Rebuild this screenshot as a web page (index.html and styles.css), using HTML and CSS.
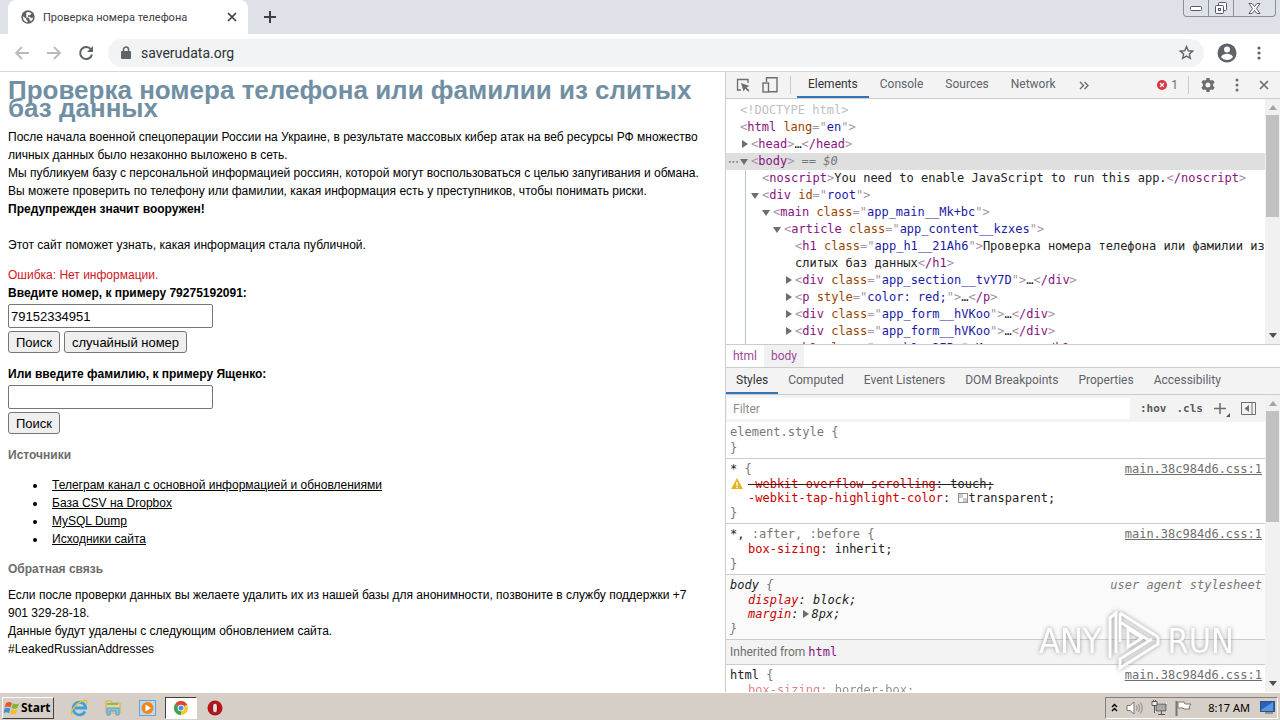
FILE: index.html
```
<!DOCTYPE html>
<html lang="ru">

<head>
     <meta charset="UTF-8">
     <meta name="viewport" content="width=device-width, initial-scale=1.0">
     <title>Проверка номера телефона</title>
     <link rel="stylesheet" href="styles.css">
</head>

<body>
     <header class="tabstrip">
          <div class="tab">
               <svg class="tab-icon" viewBox="0 0 24 24"><circle cx="12" cy="12" r="11.500" fill="#5f6368"/><path fill="#fff" d="M3.500 10.500L9 15v2l2.500 2v2C6.500 20.500 3 16.500 3.500 10.500zM9 4.500c3-2 7.500-.5 9 2l-3 2.500h-3v2.500l3 .5 3 2 2.500-1c0 3-1.500 5.500-3.500 6.500-.5-1.500-1-2-2.500-2v-3l-2-1.500H9V9.500z"/></svg>
               <span class="tab-title">Проверка номера телефона</span>
               <button class="icon-btn" aria-label="Close tab"><svg width="10" height="10" viewBox="0 0 10 10"><path d="M1 1l8 8M9 1l-8 8" stroke="#3c4043" stroke-width="1.700"/></svg></button>
          </div>
          <button class="icon-btn new-tab" aria-label="New tab"><svg width="12" height="12" viewBox="0 0 12 12"><path d="M6 0v12M0 6h12" stroke="#3c4043" stroke-width="2"/></svg></button>
          <div class="win-controls">
               <button aria-label="Minimize"><svg width="12" height="5" viewBox="0 0 12 5"><rect x=".5" y=".5" width="11" height="4" rx="1" fill="#fff" stroke="#555b66"/></svg></button>
               <button aria-label="Restore"><svg width="14" height="13" viewBox="0 0 14 13"><g fill="#fff" stroke="#555b66"><rect x="4.500" y=".5" width="8" height="8" rx="1"/><rect x="1.500" y="3.500" width="8" height="8" rx="1"/><rect x="4.500" y="6.500" width="2" height="2"/></g></svg></button>
               <button class="win-close" aria-label="Close"><svg width="13" height="11" viewBox="0 0 13 11"><path d="M1 .5h3l2.500 3L9 .5h3L8.500 5.500l3.500 5H9l-2.500-3-2.500 3H1l3.500-5z" fill="#fff" stroke="#555b66"/></svg></button>
          </div>
     </header>

     <nav class="toolbar">
          <button class="icon-btn" aria-label="Back"><svg width="16" height="16" viewBox="0 0 16 16"><path d="M15 8H2M8 2L2 8l6 6" fill="none" stroke="#b9bbbe" stroke-width="1.800"/></svg></button>
          <button class="icon-btn" aria-label="Forward"><svg width="16" height="16" viewBox="0 0 16 16"><path d="M1 8h13M8 2l6 6-6 6" fill="none" stroke="#b9bbbe" stroke-width="1.800"/></svg></button>
          <button class="icon-btn" aria-label="Reload"><svg width="16" height="16" viewBox="0 0 16 16"><path d="M13 4.500A6 6 0 1 0 14 9.500" fill="none" stroke="#5f6368" stroke-width="2"/><path d="M15 1v6H9z" fill="#5f6368"/></svg></button>
          <div class="address">
               <svg width="10" height="13" viewBox="0 0 10 13"><rect y="5" width="10" height="8" rx="1" fill="#5f6368"/><path d="M2.500 5V3.500a2.500 2.500 0 0 1 5 0V5" fill="none" stroke="#5f6368" stroke-width="1.500"/></svg>
               <input type="text" value="saverudata.org" aria-label="Address">
               <svg width="15" height="15" viewBox="0 0 24 24"><path d="M12 2.500l2.800 6.700 7.200.6-5.500 4.700 1.700 7L12 17.800l-6.200 3.700 1.700-7L2 9.800l7.200-.6z" fill="none" stroke="#5f6368" stroke-width="2.200"/></svg>
          </div>
          <button class="icon-btn profile" aria-label="Profile"><svg width="20" height="20" viewBox="0 0 20 20"><circle cx="10" cy="10" r="9.500" fill="#5f6368"/><circle cx="10" cy="6.500" r="3" fill="#fff"/><path d="M4 14c1-2.500 3.500-3.200 6-3.200s5 .7 6 3.200c-1.500 2-3.500 3-6 3s-4.500-1-6-3z" fill="#fff"/></svg></button>
          <button class="icon-btn" aria-label="Menu"><svg width="4" height="14" viewBox="0 0 4 14"><g fill="#5f6368"><circle cx="2" cy="2" r="1.600"/><circle cx="2" cy="7" r="1.600"/><circle cx="2" cy="12" r="1.600"/></g></svg></button>
     </nav>

     <div class="content">
          <main class="page">
               <h1>Проверка номера телефона или фамилии из слитых<br>баз данных</h1>
               <p>После начала военной спецоперации России на Украине, в результате массовых кибер атак на веб ресурсы РФ множество<br>личных данных было незаконно выложено в сеть.<br>Мы публикуем базу с персональной информацией россиян, которой могут воспользоваться с целью запугивания и обмана.<br>Вы можете проверить по телефону или фамилии, какая информация есть у преступников, чтобы понимать риски.<br><b>Предупрежден значит вооружен!</b><br><br>Этот сайт поможет узнать, какая информация стала публичной.</p>
               <p class="error">Ошибка: Нет информации.</p>
               <form class="form">
                    <label for="phone">Введите номер, к примеру 79275192091:</label>
                    <input type="text" id="phone" value="79152334951">
                    <div class="form-buttons">
                         <button type="button">Поиск</button>
                         <button type="button">случайный номер</button>
                    </div>
               </form>
               <form class="form form-name">
                    <label for="surname">Или введите фамилию, к примеру Ященко:</label>
                    <input type="text" id="surname">
                    <div class="form-buttons">
                         <button type="button">Поиск</button>
                    </div>
               </form>
               <h2>Источники</h2>
               <ul>
                    <li><a href="#">Телеграм канал с основной информацией и обновлениями</a></li>
                    <li><a href="#">База CSV на Dropbox</a></li>
                    <li><a href="#">MySQL Dump</a></li>
                    <li><a href="#">Исходники сайта</a></li>
               </ul>
               <h2>Обратная связь</h2>
               <p class="feedback">Если после проверки данных вы желаете удалить их из нашей базы для анонимности, позвоните в службу поддержки +7<br>901 329-28-18.<br>Данные будут удалены с следующим обновлением сайта.<br>#LeakedRussianAddresses</p>
          </main>

          <aside class="devtools">
               <div class="dt-toolbar">
                    <button class="icon-btn" aria-label="Inspect"><svg width="14" height="14" viewBox="0 0 14 14"><path d="M5 12H1.500V1.500H12V5" fill="none" stroke="#6e6e6e" stroke-width="1.300"/><path d="M5 5l8.500 3-3 1.500 3 3-1.200 1.200-3-3L7.500 13.500z" fill="#6e6e6e"/></svg></button>
                    <button class="icon-btn" aria-label="Device"><svg width="16" height="16" viewBox="0 0 16 16"><path d="M4.500 5V.7h10.500v14H7" fill="none" stroke="#6e6e6e" stroke-width="1.400"/><rect x="1" y="6" width="5.500" height="9" fill="none" stroke="#6e6e6e" stroke-width="1.400"/></svg></button>
                    <span class="divider"></span>
                    <div class="dt-tabs">
                         <button class="active">Elements</button>
                         <button>Console</button>
                         <button>Sources</button>
                         <button>Network</button>
                    </div>
                    <button class="icon-btn" aria-label="More tabs"><svg width="10" height="9" viewBox="0 0 10 9"><path d="M1 1l3.500 3.500L1 8M5.500 1L9 4.500 5.500 8" fill="none" stroke="#6e6e6e" stroke-width="1.400"/></svg></button>
                    <div class="dt-actions">
                         <button class="icon-btn errors"><svg width="10" height="10" viewBox="0 0 10 10"><circle cx="5" cy="5" r="5" fill="#db3340"/><path d="M3 3l4 4M7 3L3 7" stroke="#fff" stroke-width="1.200"/></svg>1</button>
                         <span class="divider"></span>
                         <button class="icon-btn" aria-label="Settings"><svg width="14" height="14" viewBox="0 0 14 14"><path fill="#6e6e6e" fill-rule="evenodd" d="M5.500 0h3l.4 1.900 1.300.7L12 2l1.600 2.600-1.500 1.300v2.200l1.500 1.300L12 12l-1.800-.6-1.300.7-.4 1.900h-3l-.4-1.900-1.300-.7L2 12 .4 9.400l1.500-1.300V5.900L.4 4.600 2 2l1.800.6 1.300-.7zM7 4.500a2.500 2.500 0 1 0 0 5 2.500 2.500 0 0 0 0-5z"/></svg></button>
                         <button class="icon-btn" aria-label="Options"><svg width="4" height="14" viewBox="0 0 4 14"><g fill="#6e6e6e"><circle cx="2" cy="2" r="1.500"/><circle cx="2" cy="7" r="1.500"/><circle cx="2" cy="12" r="1.500"/></g></svg></button>
                         <button class="icon-btn" aria-label="Close"><svg width="10" height="10" viewBox="0 0 10 10"><path d="M1 1l8 8M9 1L1 9" stroke="#6e6e6e" stroke-width="1.700"/></svg></button>
                    </div>
               </div>

               <div class="elements">
                    <div class="tree">
                         <div class="row d0 doctype">&lt;!DOCTYPE html&gt;</div>
                         <div class="row d0"><i>&lt;</i><b>html</b> <em>lang</em><i>="</i><s>en</s><i>"&gt;</i></div>
                         <div class="row d1 closed"><i>&lt;</i><b>head</b><i>&gt;</i>…<i>&lt;</i><b>/head</b><i>&gt;</i></div>
                         <div class="row d1 open selected"><i>&lt;</i><b>body</b><i>&gt;</i> <span class="ref">== <var>$0</var></span></div>
                         <div class="body-children">
                              <div class="row d2"><i>&lt;</i><b>noscript</b><i>&gt;</i>You need to enable JavaScript to run this app.<i>&lt;</i><b>/noscript</b><i>&gt;</i></div>
                              <div class="row d2 open"><i>&lt;</i><b>div</b> <em>id</em><i>="</i><s>root</s><i>"&gt;</i></div>
                              <div class="row d3 open"><i>&lt;</i><b>main</b> <em>class</em><i>="</i><s>app_main__Mk+bc</s><i>"&gt;</i></div>
                              <div class="row d4 open"><i>&lt;</i><b>article</b> <em>class</em><i>="</i><s>app_content__kzxes</s><i>"&gt;</i></div>
                              <div class="row d5"><i>&lt;</i><b>h1</b> <em>class</em><i>="</i><s>app_h1__21Ah6</s><i>"&gt;</i>Проверка номера телефона или фамилии из<br>слитых баз данных<i>&lt;</i><b>/h1</b><i>&gt;</i></div>
                              <div class="row d5 closed"><i>&lt;</i><b>div</b> <em>class</em><i>="</i><s>app_section__tvY7D</s><i>"&gt;</i>…<i>&lt;</i><b>/div</b><i>&gt;</i></div>
                              <div class="row d5 closed"><i>&lt;</i><b>p</b> <em>style</em><i>="</i><s>color: red;</s><i>"&gt;</i>…<i>&lt;</i><b>/p</b><i>&gt;</i></div>
                              <div class="row d5 closed"><i>&lt;</i><b>div</b> <em>class</em><i>="</i><s>app_form__hVKoo</s><i>"&gt;</i>…<i>&lt;</i><b>/div</b><i>&gt;</i></div>
                              <div class="row d5 closed"><i>&lt;</i><b>div</b> <em>class</em><i>="</i><s>app_form__hVKoo</s><i>"&gt;</i>…<i>&lt;</i><b>/div</b><i>&gt;</i></div>
                              <div class="row d5"><i>&lt;</i><b>h1</b> <em>class</em><i>="</i><s>app_h1__2IBo</s><i>"&gt;</i>Источники<i>&lt;</i><b>/h1</b><i>&gt;</i></div>
                         </div>
                    </div>
                    <div class="scrollbar tree-scroll"><span class="up"></span><span class="thumb"></span><span class="down"></span></div>
               </div>

               <div class="crumbs"><a href="#">html</a><a href="#" class="current">body</a></div>

               <div class="side-tabs">
                    <button class="active">Styles</button>
                    <button>Computed</button>
                    <button>Event Listeners</button>
                    <button>DOM Breakpoints</button>
                    <button>Properties</button>
                    <button>Accessibility</button>
               </div>

               <div class="styles-pane">
                    <div class="styles-main">
                         <div class="filter">
                              <input type="text" placeholder="Filter" aria-label="Filter">
                              <button>:hov</button>
                              <button>.cls</button>
                              <button class="add-rule" aria-label="New rule"><svg width="18" height="16" viewBox="0 0 18 16"><path d="M7 2v11M1 7.500h12" stroke="#6e6e6e" stroke-width="1.500"/><path d="M17 12v4h-4z" fill="#5a5a5a"/></svg></button>
                              <button aria-label="Sidebar"><svg width="15" height="13" viewBox="0 0 15 13"><path d="M.5.5h14v12H.5zM11 .5v12" fill="none" stroke="#6e6e6e"/><path d="M8 3v7L3.500 6.500z" fill="#6e6e6e"/></svg></button>
                         </div>
                         <div class="rules">
                              <section class="rule muted">
                                   <div class="selector">element.style {</div>
                                   <div class="end">}</div>
                              </section>
                              <section class="rule">
                                   <div class="selector"><span>* <u>{</u></span><a href="#">main.38c984d6.css:1</a></div>
                                   <div class="prop invalid"><svg class="warn" width="12" height="11" viewBox="0 0 12 11"><path d="M6 0l6 11H0z" fill="#e8b321"/><path d="M6 4v3.500M6 8.500V10" stroke="#fff" stroke-width="1.400"/></svg><del><span>-webkit-overflow-scrolling</span>: touch;</del></div>
                                   <div class="prop"><span>-webkit-tap-highlight-color</span>: <span class="swatch"></span>transparent;</div>
                                   <div class="end">}</div>
                              </section>
                              <section class="rule">
                                   <div class="selector"><span>*, <u>:after, :before {</u></span><a href="#">main.38c984d6.css:1</a></div>
                                   <div class="prop"><span>box-sizing</span>: inherit;</div>
                                   <div class="end">}</div>
                              </section>
                              <section class="rule agent">
                                   <div class="selector"><span>body <u>{</u></span><u>user agent stylesheet</u></div>
                                   <div class="prop"><span>display</span>: block;</div>
                                   <div class="prop"><span>margin</span>:<span class="expand"></span>8px;</div>
                                   <div class="end">}</div>
                              </section>
                              <div class="inherited">Inherited from <a href="#">html</a></div>
                              <section class="rule">
                                   <div class="selector"><span>html <u>{</u></span><a href="#">main.38c984d6.css:1</a></div>
                                   <div class="prop faded"><span>box-sizing</span>: border-box;</div>
                              </section>
                         </div>
                    </div>
                    <div class="scrollbar"><span class="up"></span><span class="thumb"></span><span class="down"></span></div>
               </div>
               <div class="watermark">
                    <span>ANY</span>
                    <svg width="56" height="62" viewBox="0 0 56 62"><path d="M4 48V8l6-5v40M14 3l38 24M14 3v29M14 12l30 19M52 27v7L14 58v-9l32-20M22 19v18l14-9z" fill="none" stroke="#fff" stroke-width="3"/></svg>
                    <span>RUN</span>
               </div>
          </aside>
     </div>

     <footer class="taskbar">
          <button class="start"><svg width="16" height="16" viewBox="0 0 16 16"><path d="M2 3q3-2 6 0L6.500 7.500q-3-2-6 0z" fill="#e8552d"/><path d="M9 3.200q3 2 6 0L13.500 7.800q-3 2-6 0z" fill="#7db82e"/><path d="M.3 8.800q3-2 6 0L5 13.300q-3-2-5 0z" fill="#3a93d8"/><path d="M7.300 9q3 2 6 0L12 13.600q-3 2-6 0z" fill="#f5bd2e"/></svg>Start</button>
          <button class="task" aria-label="Internet Explorer"><svg width="18" height="18" viewBox="0 0 18 18"><path d="M15 12.500a6.300 6.300 0 1 1 .7-3.500H5" fill="none" stroke="#3aa2dc" stroke-width="2.800"/><path d="M2 16C-1 13 7 3 14 1.500c4-.8 3 2.500 2 4" fill="none" stroke="#e6bd3c" stroke-width="1.300"/></svg></button>
          <button class="task" aria-label="Explorer"><svg width="18" height="16" viewBox="0 0 18 16"><path d="M2 1h5l1 2h8v10H2z" fill="#eed587" stroke="#cfae50"/><path d="M3 4h11" stroke="#6cab65" stroke-width="1.500"/><path d="M3 15V8h12v7h-3v-4H6v4z" fill="#82c4e6" stroke="#5b9ec8"/></svg></button>
          <button class="task" aria-label="Media Player"><svg width="17" height="16" viewBox="0 0 17 16"><rect x=".5" y=".5" width="16" height="15" fill="#b9daf0" stroke="#6f9fca"/><circle cx="8.500" cy="8" r="6" fill="#f0861c"/><path d="M6.500 4.500v7l5.500-3.500z" fill="#fff"/></svg></button>
          <button class="task running" aria-label="Chrome"><svg width="14" height="14" viewBox="0 0 14 14"><circle cx="7" cy="7" r="7" fill="#f6c62d"/><path d="M7 7L.9 3.500A7 7 0 0 1 13.100 3.500z" fill="#dc4437"/><path d="M7 7l0 7A7 7 0 0 1 .9 3.500z" fill="#3ba257"/><circle cx="7" cy="7" r="3.300" fill="#fff"/><circle cx="7" cy="7" r="2.500" fill="#4a8bf0"/></svg></button>
          <button class="task" aria-label="Opera"><svg width="16" height="16" viewBox="0 0 16 16"><circle cx="8" cy="8" r="7.500" fill="#b7131a"/><ellipse cx="8" cy="8" rx="2.500" ry="5" fill="#e7dedb" stroke="#7d0c10"/></svg></button>
          <div class="tray">
               <svg width="7" height="9" viewBox="0 0 7 9"><path d="M1 4l2.500-2.500L6 4M1 8l2.500-2.500L6 8" fill="none" stroke="#000" stroke-width="1.400"/></svg>
               <svg width="17" height="14" viewBox="0 0 17 14"><path d="M1 4.500h3L8 1v12L4 9.500H1z" fill="#fff" stroke="#777"/><path d="M10.500 4.500q1.500 2.500 0 5M12.500 3q2.500 4 0 8M14.500 1.500q3.500 5.500 0 11" fill="none" stroke="#888"/></svg>
               <svg width="16" height="16" viewBox="0 0 16 16"><rect x="4.500" y="3.500" width="11" height="8" fill="#aaa" stroke="#fff"/><path d="M5 4h10v7H5zM7 14.500h7M10.500 11v3" fill="none" stroke="#555"/><path d="M1 1.500h5v4H1zM2.500 0v2M4.500 0v2M3.500 6v7" fill="#eee" stroke="#555"/></svg>
               <svg width="17" height="16" viewBox="0 0 17 16"><path d="M1.500 1v15" stroke="#777" stroke-width="2"/><path d="M3 2h6l1 2h6l-2 3 1 2H9L8 8H3z" fill="#fff" stroke="#777"/></svg>
               <time>8:17 AM</time>
               <svg width="15" height="13" viewBox="0 0 15 13"><rect x=".5" y=".5" width="14" height="10" fill="#2464bd" stroke="#315180"/><path d="M1 9L13 1v9H1z" fill="#5797df"/><path d="M5 12h8" stroke="#555"/></svg>
          </div>
     </footer>
</body>
</html>
```
FILE: styles.css
```
html {
     box-sizing: border-box;
     font-family: Roboto, sans-serif;
     font-size: 12px;
}

*,
*:before,
*:after {
     box-sizing: inherit;
}

body {
     margin: 0;
     height: 100vh;
     display: flex;
     flex-direction: column;
     overflow: hidden;
}

button {
     font-family: inherit;
     font-size: inherit;
     padding: 0;
}

svg {
     display: block;
     flex-shrink: 0;
}

.icon-btn {
     border: 0;
     background: none;
     color: #6e6e6e;
     display: flex;
     align-items: center;
}

/* browser window */
.tabstrip {
     flex: 0 0 34px;
     display: flex;
     background-color: #dee1e8;
}

.tab {
     width: 240px;
     margin-left: 8px;
     padding: 0 11px 0 13px;
     display: flex;
     align-items: center;
     gap: 8px;
     background-color: #fff;
     border-radius: 8px 8px 0 0;
}

.tab-icon {
     width: 14px;
     height: 14px;
}

.tab-title {
     flex: 1;
     font-size: 11px;
     color: #3c4043;
     white-space: nowrap;
}

.new-tab {
     margin-left: 16px;
}

.win-controls {
     display: flex;
     height: 17px;
     margin: 0 4px 0 auto;
     border: 1px solid #8a8f9a;
     border-top: 0;
     border-radius: 0 0 4px 4px;
}

.win-controls button {
     width: 25px;
     border: 0;
     border-right: 1px solid #8a8f9a;
     background: none;
     display: flex;
     justify-content: center;
     align-items: center;
}

.win-controls .win-close {
     width: 41px;
     border-right: 0;
}

.toolbar {
     flex: 0 0 38px;
     display: flex;
     align-items: center;
     gap: 16px;
     padding: 0 19px 0 14px;
     border-bottom: 1px solid #d5d7da;
     background-color: #fff;
}

.address {
     flex: 1;
     height: 28px;
     margin-left: -2px;
     padding: 0 10px 0 13px;
     display: flex;
     align-items: center;
     gap: 10px;
     background-color: #f1f3f4;
     border-radius: 14px;
}

.address input {
     flex: 1;
     border: 0;
     padding: 0;
     background: none;
     font-family: inherit;
     font-size: 14px;
     color: #303134;
}

.profile {
     margin: 0 4px 0 -3px;
}

.content {
     flex: 1;
     min-height: 0;
     display: flex;
}

/* web page */
.page {
     flex: 1;
     min-width: 0;
     padding: 9px 8px;
     overflow: hidden;
     font-family: "Liberation Sans", sans-serif;
     font-size: 12px;
     line-height: 18px;
     color: #000;
     white-space: nowrap;
}

.page h1 {
     margin: 0 0 11px;
     font-size: 26px;
     line-height: 18px;
     color: #708fa3;
}

.page p {
     margin: 0;
}

.page .error {
     margin-top: 12px;
     color: #d0161c;
}

.form label {
     display: block;
     font-weight: bold;
}

.form input {
     display: block;
     width: 205px;
     height: 24px;
     margin-top: 2px;
     padding: 0 2px;
     border: 1px solid #767676;
     border-radius: 2px;
     font-family: inherit;
     font-size: 13px;
}

.form-buttons {
     display: flex;
     gap: 4px;
     margin-top: 3px;
}

.form-buttons button {
     height: 22px;
     padding: 0 7px;
     border: 1px solid #767676;
     border-radius: 3px;
     background-color: #efefef;
     font-size: 13px;
     color: #000;
}

.form-name {
     margin-top: 12px;
}

.page h2 {
     margin: 12px 0;
     font-size: 12px;
     color: #6c6c6c;
}

.page h2:last-of-type {
     margin-bottom: 8px;
}

.page ul {
     margin: 0;
     padding-left: 39px;
}

.page li {
     padding-left: 5px;
}

.page a {
     color: #000;
}

/* devtools */
.devtools {
     position: relative;
     flex: 0 0 555px;
     min-width: 0;
     display: flex;
     flex-direction: column;
     border-left: 1px solid #cacdd1;
     background-color: #fff;
}

.dt-toolbar {
     flex: 0 0 27px;
     display: flex;
     align-items: center;
     padding: 0 11px 0 10px;
     gap: 12px;
     background-color: #f3f3f3;
     border-bottom: 1px solid #cccccc;
}

.divider {
     width: 1px;
     height: 18px;
     background-color: #cccccc;
}

.dt-tabs,
.side-tabs {
     display: flex;
     align-self: stretch;
}

.dt-tabs {
     margin-left: -6px;
}

.dt-tabs button,
.side-tabs button {
     padding: 0 11px;
     border: 0;
     border-bottom: 2px solid transparent;
     background: none;
     color: #5f6368;
}

.dt-tabs button.active,
.side-tabs button.active {
     color: #333;
     border-bottom-color: #3573b8;
}

.dt-actions {
     margin-left: auto;
     display: flex;
     align-items: center;
     gap: 20px;
}

.dt-actions .divider {
     margin: 0 -8px 0 -10px;
}

.errors {
     gap: 4px;
}

.elements {
     flex: 0 0 246px;
     min-height: 0;
     display: flex;
     border-bottom: 1px solid #cccccc;
}

.tree,
.rules {
     flex: 1;
     min-width: 0;
     overflow: hidden;
     font-family: "DejaVu Sans Mono", monospace;
     font-size: 12px;
     white-space: nowrap;
}

.tree {
     padding-top: 3px;
     color: #222;
}

.row {
     position: relative;
     line-height: 17px;
}

.row i {
     font-style: normal;
     color: #a894a6;
}

.row b {
     font-weight: normal;
     color: #881280;
}

.row em {
     font-style: normal;
     color: #994500;
}

.row s {
     text-decoration: none;
     color: #1a1aa6;
}

.row.doctype {
     color: #c0c0c0;
}

.d0 { padding-left: 14px; }
.d1 { padding-left: 25px; }
.d2 { padding-left: 36px; }
.d3 { padding-left: 47px; }
.d4 { padding-left: 58px; }
.d5 { padding-left: 69px; }

.open:before,
.closed:before {
     content: "";
     display: inline-block;
     margin-left: -11px;
     margin-right: 3px;
     border: 4px solid transparent;
     border-top: 6px solid #6e6e6e;
     border-bottom: 0;
}

.closed:before {
     margin-left: -9px;
     border: 4px solid transparent;
     border-left: 6px solid #6e6e6e;
     border-right: 0;
}

.selected {
     background-color: #dfdfdf;
}

.selected:after {
     content: "•••";
     position: absolute;
     left: 2px;
     top: 0;
     font-size: 6px;
     color: #6e6e6e;
}

.ref {
     color: #777;
}

.body-children {
     position: relative;
}

.body-children:before {
     content: "";
     position: absolute;
     left: 19px;
     top: 0;
     bottom: 0;
     border-left: 1px solid #b4c8dc;
}

.scrollbar {
     flex: 0 0 15px;
     display: flex;
     flex-direction: column;
     align-items: center;
     padding: 6px 0;
     background-color: #f1f1f1;
}

.scrollbar .up {
     border: 4px solid transparent;
     border-top: 0;
     border-bottom: 5px solid #a3a3a3;
}

.scrollbar .thumb {
     width: 13px;
     height: 111px;
     margin-top: 5px;
     background-color: #c1c1c1;
}

.tree-scroll .thumb {
     height: 102px;
}

.scrollbar .down {
     margin-top: auto;
     border: 4px solid transparent;
     border-bottom: 0;
     border-top: 5px solid #505050;
}

.crumbs {
     flex: 0 0 23px;
     display: flex;
     border-bottom: 1px solid #cccccc;
}

.crumbs a {
     padding: 0 7px;
     line-height: 22px;
     color: #a0489a;
     text-decoration: none;
}

.crumbs .current {
     background-color: #f1f1f1;
}

.side-tabs {
     flex: 0 0 27px;
     background-color: #f3f3f3;
     border-bottom: 1px solid #cccccc;
}

.side-tabs button {
     padding: 0 10px;
}

.styles-pane {
     flex: 1;
     min-height: 0;
     display: flex;
}

.styles-main {
     flex: 1;
     min-width: 0;
     display: flex;
     flex-direction: column;
}

.filter {
     flex: 0 0 27px;
     display: flex;
     align-items: center;
     padding: 3px 9px 3px 1px;
     gap: 10px;
     background-color: #f3f3f3;
}

.filter input {
     flex: 1;
     min-width: 0;
     height: 21px;
     border: 0;
     padding: 0 6px;
     font-family: inherit;
     font-size: 12px;
}

.filter input::placeholder {
     color: #8c8c8c;
}

.filter button {
     border: 0;
     background: none;
     font-family: "DejaVu Sans Mono", monospace;
     font-weight: bold;
     font-size: 11px;
     color: #5a5a5a;
}

.rule {
     padding: 2px 3px 2px 4px;
     border-bottom: 1px solid #cccccc;
     color: #222;
}

.selector,
.end {
     line-height: 16px;
}

.selector {
     display: flex;
     justify-content: space-between;
}

.selector u {
     color: #777;
     text-decoration: none;
}

.selector a {
     color: #6e6e6e;
}

.end,
.muted {
     color: #777;
}

.prop {
     position: relative;
     padding-left: 18px;
     line-height: 14px;
}

.prop > span:first-child,
.prop del span {
     color: #c80000;
}

.warn {
     position: absolute;
     left: 1px;
     top: 1px;
}

.swatch {
     display: inline-block;
     width: 10px;
     height: 10px;
     margin-right: 1px;
     border: 1px solid #909090;
     background: conic-gradient(#fff 25%, #ccc 0 50%, #fff 0 75%, #ccc 0);
     vertical-align: -1px;
}

.expand {
     display: inline-block;
     margin: 0 3px 0 4px;
     border: 4px solid transparent;
     border-left: 6px solid #6e6e6e;
     border-right: 0;
}

.agent {
     background-color: #fafafa;
     font-style: italic;
}

.inherited {
     height: 25px;
     padding: 0 4px;
     line-height: 24px;
     background-color: #f3f3f3;
     border-bottom: 1px solid #cccccc;
     font-family: Roboto, sans-serif;
     color: #6e6e6e;
}

.inherited a {
     font-family: "DejaVu Sans Mono", monospace;
     color: #881280;
     text-decoration: none;
}

.faded {
     opacity: .5;
}

.watermark {
     position: absolute;
     right: 46px;
     bottom: 20px;
     display: flex;
     align-items: center;
     gap: 5px;
     font-family: "DejaVu Sans Condensed", "Liberation Sans", sans-serif;
     font-size: 34px;
     color: #fff;
     opacity: .85;
     filter: drop-shadow(0 0 2px #888);
     pointer-events: none;
}

/* windows taskbar */
.taskbar {
     flex: 0 0 28px;
     display: flex;
     align-items: center;
     padding: 2px 2px 0;
     border-top: 1px solid #fff;
     background-color: #d6cfc7;
}

.start {
     height: 22px;
     width: 52px;
     margin-right: 9px;
     display: flex;
     align-items: center;
     gap: 1px;
     padding: 0 1px;
     border: 1px solid;
     border-color: #fff #404040 #404040 #fff;
     background: none;
     font-family: "Noto Sans", sans-serif;
     font-weight: bold;
     font-size: 12px;
     color: #000;
}

.task {
     width: 32px;
     height: 22px;
     margin-right: 2px;
     display: flex;
     justify-content: center;
     align-items: center;
     border: 0;
     background: none;
}

.task.running {
     border: 1px solid;
     border-color: #404040 #fff #fff #404040;
     background-color: #fff;
}

.tray {
     margin-left: auto;
     height: 22px;
     display: flex;
     align-items: center;
     gap: 8px;
     padding: 0 2px 0 5px;
     border: 1px solid;
     border-color: #808080 #fff #fff #808080;
     font-family: "Noto Sans", sans-serif;
     font-size: 11px;
     color: #000;
}

.tray time {
     margin: 0 2px 0 8px;
}
```
